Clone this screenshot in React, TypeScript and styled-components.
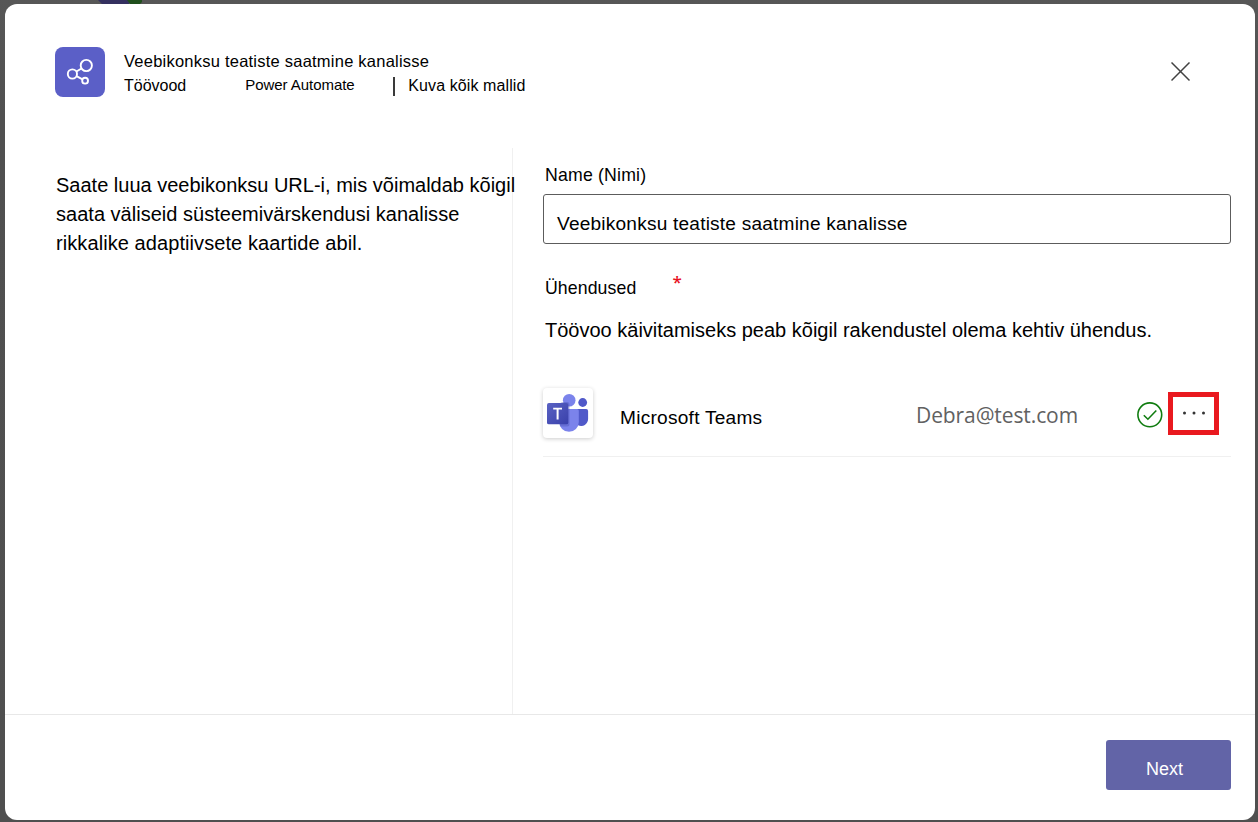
import React from "react";
import styled, { createGlobalStyle } from "styled-components";

const GlobalStyle = createGlobalStyle`
  * { box-sizing: border-box; }
  body {
    margin: 0;
    background: #505050;
    font-family: "Liberation Sans", Arial, sans-serif;
    color: #000;
  }
`;

const Backdrop = styled.div`
  position: relative;
  width: 1258px;
  height: 822px;
  padding: 4px 3px 2px 5px;
  background: linear-gradient(#575757, #505050 14%, #4f4f4f);
  overflow: hidden;
`;

const BackdropAvatar = styled.svg`
  position: absolute;
  left: 96px;
  top: 0;
`;

const Dialog = styled.div`
  display: flex;
  flex-direction: column;
  width: 1250px;
  height: 816px;
  border-radius: 12px;
  background: #fff;
  position: relative;
`;

const Header = styled.header`
  display: flex;
  align-items: flex-start;
  height: 144px;
  padding: 43px 64px 0 50px;
`;

const AppTile = styled.div`
  width: 50px;
  height: 50px;
  border-radius: 8px;
  background: #5b5fc7;
`;

const Titles = styled.div`
  flex: 1;
  padding: 2px 0 0 19px;
`;

const Text = styled.span<{ $size: number; $line?: number; $spacing?: number }>`
  display: block;
  white-space: nowrap;
  font-size: ${(p) => p.$size}px;
  line-height: ${(p) => p.$line ?? 24}px;
  letter-spacing: ${(p) => p.$spacing ?? 0}px;
`;

const Meta = styled.div`
  display: flex;
  align-items: center;
  height: 24px;
  margin-top: 1px;
`;

const Author = styled(Text)`
  width: 148px;
  margin-left: 59px;
  padding-bottom: 2px;
`;

const Bar = styled.span`
  width: 2px;
  height: 19px;
  margin-right: 13px;
  background: #3a3a3a;
`;

const CloseButton = styled.button`
  display: block;
  width: 20px;
  height: 20px;
  margin: 15px 0 0;
  padding: 0;
  border: 0;
  background: none;
`;

const Body = styled.main`
  display: flex;
  height: 566px;
`;

const Intro = styled.section`
  width: 508px;
  padding: 23px 0 0 51px;
  border-right: 1px solid #f0f0f0;
`;

const Form = styled.section`
  width: 718px;
  padding: 15px 0 0 30px;
`;

const Label = styled.div`
  display: flex;
  padding-left: 2px;
`;

const NameField = styled.div`
  display: flex;
  align-items: center;
  height: 50px;
  margin: 7px 0 32px;
  padding: 9px 13px 0;
  border: 1px solid #5c5c5c;
  border-radius: 3px;
`;

const Required = styled.span`
  margin: -6px 0 6px 36px;
  font-family: "Open Sans", sans-serif;
  font-size: 17px;
  font-weight: 600;
  line-height: 24px;
  color: #e81123;
`;

const Note = styled.div`
  margin: 18px 0 0 2px;
`;

const Connection = styled.div`
  display: flex;
  align-items: flex-start;
  height: 72px;
  margin-top: 43px;
  border-bottom: 1px solid #f0f0f0;
`;

const TeamsTile = styled.div`
  width: 50px;
  height: 50px;
  margin-top: 3px;
  border-radius: 4px;
  background: #fff;
  box-shadow: 0 1px 4px rgba(0, 0, 0, 0.2);
`;

const ServiceName = styled.div`
  width: 323px;
  padding: 21px 0 0 27px;
`;

const Account = styled.div`
  width: 195px;
  padding-top: 17px;
  font-family: "Open Sans", "Noto Sans", sans-serif;
  font-size: 21px;
  line-height: 26px;
  letter-spacing: -0.1px;
  color: #616161;
`;

const Status = styled.svg`
  display: block;
  margin: 16.500px 5px 0 26px;
`;

const MoreButton = styled.button`
  display: flex;
  align-items: center;
  justify-content: center;
  width: 51px;
  height: 43px;
  margin-top: 6.500px;
  padding: 0;
  border: 5px solid #e9191f;
  background: #fff;
`;

const Footer = styled.footer`
  display: flex;
  justify-content: flex-end;
  height: 106px;
  padding: 25px 24px 0 0;
  border-top: 1px solid #e8e8e8;
`;

const NextButton = styled.button`
  width: 125px;
  height: 50px;
  padding: 8px 0 0 40px;
  border: 0;
  border-radius: 3px;
  background: #6264a7;
  color: #fff;
  font-family: inherit;
  text-align: left;
`;

const WorkflowIcon = () => (
  <svg width="50" height="50" viewBox="0 0 50 50" fill="none" stroke="#fff" strokeWidth="1.9">
    <circle cx="31.3" cy="18.5" r="5.6" />
    <circle cx="17.4" cy="27" r="4.6" />
    <circle cx="30.1" cy="33.700" r="2.900" />
    <path d="M21.400 24.500L26.500 21.500M21.500 29.200L27.500 32.300" />
  </svg>
);

const TeamsIcon = () => (
  <svg width="50" height="50" viewBox="0 0 50 50">
    <defs>
      <linearGradient id="teams-badge" x1="0" y1="0" x2="1" y2="1">
        <stop offset="0" stopColor="#5a62c3" />
        <stop offset="1" stopColor="#3940ab" />
      </linearGradient>
    </defs>
    <circle cx="39.7" cy="14.5" r="4.4" fill="#5059c9" />
    <path d="M33 21H43.2a1.9 1.9 0 0 1 1.900 1.900V31a7 7 0 0 1-10 6.300z" fill="#5059c9" />
    <circle cx="26.2" cy="12.2" r="6.3" fill="#7b83eb" />
    <path d="M17.500 21H34a1.800 1.800 0 0 1 1.800 1.800V34a9.800 9.800 0 0 1-19.600 0V22.300z" fill="#7b83eb" />
    <path d="M19 14H24a2.500 2.500 0 0 1 2.500 2.500V36a2.500 2.500 0 0 1-2.500 2.500H17.400L16.200 34V16z" fill="#4048a5" opacity=".35" />
    <rect x="4" y="15" width="21.300" height="21.300" rx="1.900" fill="url(#teams-badge)" />
    <path d="M10.200 19.700H19V21.500H15.600V31.600H13.600V21.500H10.200z" fill="#fff" />
  </svg>
);

export default function App() {
  return (
    <>
      <GlobalStyle />
      <Backdrop>
        <BackdropAvatar width="48" height="5" viewBox="0 0 48 5">
          <path d="M2 0H33V4H6z" fill="#34305f" />
          <path d="M31 0H46V2L44 4H34z" fill="#1f4f1c" />
        </BackdropAvatar>
        <Dialog>
          <Header>
            <AppTile>
              <WorkflowIcon />
            </AppTile>
            <Titles>
              <Text $size={16.5} $line={24} $spacing={0.23}>Veebikonksu teatiste saatmine kanalisse</Text>
              <Meta>
                <Text $size={16}>Töövood</Text>
                <Author $size={15} $spacing={-0.05}>Power Automate</Author>
                <Bar />
                <Text $size={16} $spacing={0.1}>Kuva kõik mallid</Text>
              </Meta>
            </Titles>
            <CloseButton aria-label="Sulge">
              <svg width="20" height="20" viewBox="0 0 20 20" stroke="#424242" strokeWidth="1.500">
                <path d="M.5 .5L18.500 18.500M18.500 .5L.5 18.500" />
              </svg>
            </CloseButton>
          </Header>
          <Body>
            <Intro>
              <Text $size={20} $line={29}>Saate luua veebikonksu URL-i, mis võimaldab kõigil</Text>
              <Text $size={20} $line={29} $spacing={0.02}>saata väliseid süsteemivärskendusi kanalisse</Text>
              <Text $size={20} $line={29} $spacing={0.08}>rikkalike adaptiivsete kaartide abil.</Text>
            </Intro>
            <Form>
              <Label>
                <Text $size={17.7} $spacing={0.18}>Name (Nimi)</Text>
              </Label>
              <NameField>
                <Text $size={19.1} $spacing={0.2}>Veebikonksu teatiste saatmine kanalisse</Text>
              </NameField>
              <Label>
                <Text $size={17.7} $spacing={0.1}>Ühendused</Text>
                <Required>*</Required>
              </Label>
              <Note>
                <Text $size={20}>Töövoo käivitamiseks peab kõigil rakendustel olema kehtiv ühendus.</Text>
              </Note>
              <Connection>
                <TeamsTile>
                  <TeamsIcon />
                </TeamsTile>
                <ServiceName>
                  <Text $size={19.1} $spacing={0.25}>Microsoft Teams</Text>
                </ServiceName>
                <Account>Debra@test.com</Account>
                <Status width="26" height="26" viewBox="0 0 26 26" fill="none" stroke="#107c10" strokeWidth="1.600">
                  <circle cx="12.800" cy="12.800" r="11.900" />
                  <path d="M6.800 13.200L10.900 17.200L19.300 8.500" />
                </Status>
                <MoreButton aria-label="Rohkem">
                  <svg width="24" height="4" viewBox="0 0 24 4" fill="#333">
                    <circle cx="2.500" cy="2" r="1.500" />
                    <circle cx="12" cy="2" r="1.500" />
                    <circle cx="21.500" cy="2" r="1.500" />
                  </svg>
                </MoreButton>
              </Connection>
            </Form>
          </Body>
          <Footer>
            <NextButton>
              <Text $size={18}>Next</Text>
            </NextButton>
          </Footer>
        </Dialog>
      </Backdrop>
    </>
  );
}
